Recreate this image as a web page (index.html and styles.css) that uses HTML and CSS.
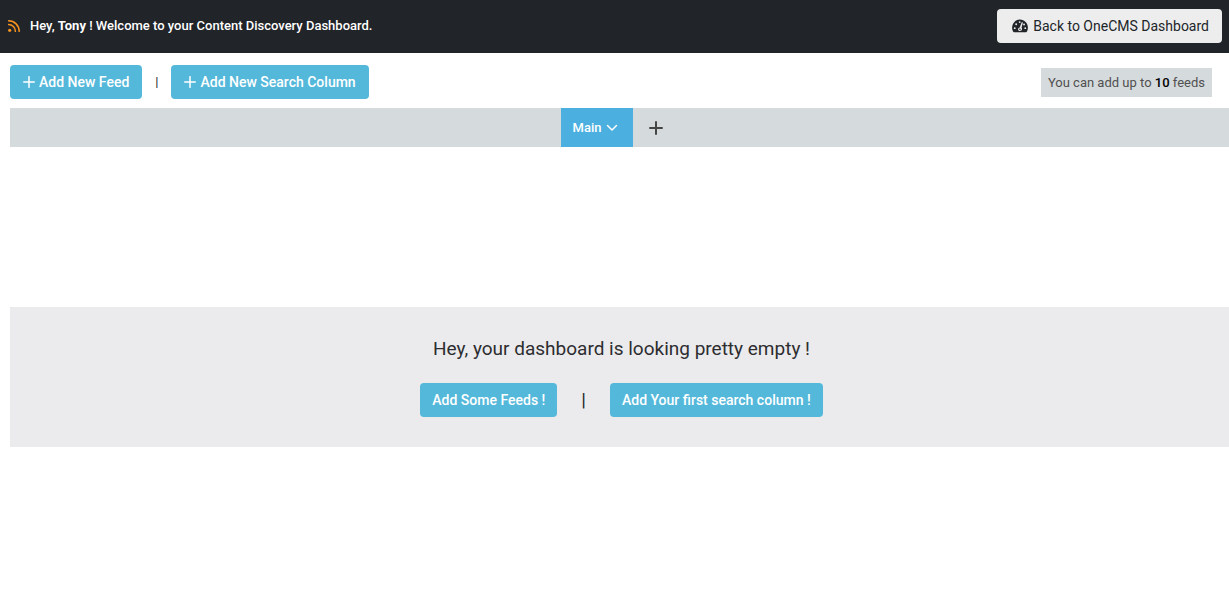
FILE: index.html
```html
<!DOCTYPE html>
<html lang="en">
<head>
<meta charset="utf-8">
<meta name="viewport" content="width=device-width, initial-scale=1">
<title>Content Discovery Dashboard</title>
<link rel="stylesheet" href="styles.css">
</head>
<body>
<header class="topbar">
  <svg class="icon-rss" viewBox="0 0 12 12" aria-hidden="true">
    <circle cx="1.7" cy="10.3" r="1.6"/>
    <path d="M.6 4.6a6.8 6.8 0 0 1 6.8 6.8M.6.8a10.6 10.6 0 0 1 10.6 10.6"/>
  </svg>
  <p class="greeting">Hey, <strong>Tony</strong> ! Welcome to your Content Discovery Dashboard.</p>
  <a class="btn btn-light" href="#">
    <svg class="icon-gauge" viewBox="0 0 576 512" aria-hidden="true">
      <path d="M288 16C129 16 0 150 0 316c0 56 14 110 39 154 6 10 16 16 27 16h443c12 0 22-6 28-16 25-44 39-98 39-154C576 150 447 16 288 16z"/>
      <g class="gauge-marks">
        <circle cx="96" cy="336" r="34"/>
        <circle cx="148" cy="190" r="34"/>
        <circle cx="276" cy="112" r="34"/>
        <circle cx="436" cy="200" r="34"/>
        <circle cx="480" cy="336" r="34"/>
        <path d="M346 132c12-32 56-16 46 18l-48 164c34 38 26 126-58 126-86 0-90-116-6-132z"/>
      </g>
      <circle cx="286" cy="376" r="30"/>
    </svg>
    <span>Back to OneCMS Dashboard</span>
  </a>
</header>
<main class="content">
  <div class="toolbar">
    <button class="btn btn-primary" type="button">
      <svg class="icon-plus" viewBox="0 0 12 12" aria-hidden="true"><path d="M6 .7v10.600M.7 6h10.600"/></svg>
      <span>Add New Feed</span>
    </button>
    <span class="divider">|</span>
    <button class="btn btn-primary" type="button">
      <svg class="icon-plus" viewBox="0 0 12 12" aria-hidden="true"><path d="M6 .7v10.600M.7 6h10.600"/></svg>
      <span>Add New Search Column</span>
    </button>
    <p class="quota">You can add up to <b>10</b> feeds</p>
  </div>
  <nav class="tabs" aria-label="Dashboards">
    <button class="tab" type="button">
      <span>Main</span>
      <svg class="icon-chevron" viewBox="0 0 12 8" aria-hidden="true"><path d="M1.500 1.500 6 6l4.500-4.500"/></svg>
    </button>
    <button class="tab-add" type="button" aria-label="Add tab">
      <svg class="icon-tab-plus" viewBox="0 0 14 14" aria-hidden="true"><path d="M7 1v12M1 7h12"/></svg>
    </button>
  </nav>
  <section class="empty">
    <h1 class="empty-title">Hey, your dashboard is looking pretty empty !</h1>
    <div class="empty-actions">
      <button class="btn btn-primary" type="button">Add Some Feeds !</button>
      <span class="divider-large">|</span>
      <button class="btn btn-primary" type="button">Add Your first search column !</button>
    </div>
  </section>
</main>
</body>
</html>
```
FILE: styles.css
```css
* { box-sizing: border-box; }
body {
  margin: 0;
  background: #fff;
  color: #212529;
  font: 14px/20px Roboto, "Liberation Sans", sans-serif;
}
p, h1 { margin: 0; }
button { border: 0; font: inherit; cursor: pointer; }
svg { flex: none; fill: none; stroke: currentColor; }

.topbar {
  display: flex;
  align-items: center;
  padding: 9px 7px 10px 8px;
  background: #212429;
  color: #fff;
}
.icon-rss { width: 12px; height: 12px; color: #f7931e; stroke-width: 1.5; stroke-linecap: round; }
.icon-rss circle { fill: currentColor; stroke: none; }
.greeting { margin-left: 10px; font-size: 13px; font-weight: 500; }
.greeting strong { font-weight: 700; }

.btn {
  display: inline-flex;
  align-items: center;
  gap: 4px;
  height: 34px;
  padding: 0 12px;
  border-radius: 4px;
  font-weight: 500;
  white-space: nowrap;
  text-decoration: none;
}
.btn-primary { background: #54b8da; color: #fff; }
.btn-light { margin-left: auto; padding: 0 13px 0 15px; gap: 5px; background: #ededed; color: #212529; font-weight: 400; }
.icon-gauge { width: 16px; height: 14px; fill: currentColor; stroke: none; }
.gauge-marks { fill: #ededed; }
.icon-plus { width: 12px; height: 12px; stroke-width: 1.5; stroke-linecap: round; }

.content { padding-left: 10px; }
.toolbar { display: flex; align-items: center; padding: 12px 17px 9px 0; }
.toolbar .btn { padding: 0 13px; }
.divider { margin: 0 13px; font-size: 13px; }
.quota {
  margin-left: auto;
  padding: 5px 7px 4px;
  background: #d5dadd;
  color: #505050;
  font-size: 13px;
}
.quota b { color: #000; font-weight: 500; }

.tabs { display: flex; justify-content: center; height: 39px; background: #d5dadd; }
.tab {
  display: flex;
  align-items: center;
  gap: 5px;
  padding: 0 15px 0 12px;
  background: #4bafe0;
  color: #fff;
  font-size: 13px;
  font-weight: 500;
}
.icon-chevron { width: 12px; height: 8px; stroke-width: 1.5; stroke-linecap: round; stroke-linejoin: round; }
.tab-add { display: flex; align-items: center; padding: 0 15px 0 16px; background: none; color: #454545; }
.icon-tab-plus { width: 14px; height: 14px; stroke-width: 2; stroke-linecap: round; }

.empty {
  margin-top: 160px;
  padding: 30px 0 30px 4px;
  background: #ebebed;
  text-align: center;
}
.empty-title { color: #2d2d30; font-size: 19px; line-height: 24px; font-weight: 400; }
.empty-actions { display: flex; justify-content: center; align-items: center; margin-top: 22px; }
.divider-large { margin: 0 24px; font-size: 19px; }
```
